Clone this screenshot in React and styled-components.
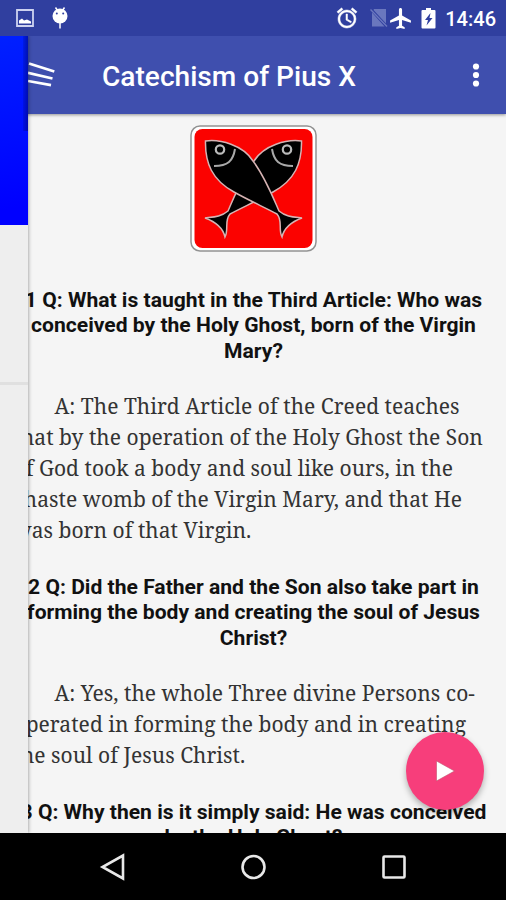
import styled, { createGlobalStyle } from "styled-components";
import { MdAlarm, MdAirplanemodeActive } from "react-icons/md";

const questions = [
  {
    question: [
      "1 Q: What is taught in the Third Article: Who was",
      "conceived by the Holy Ghost, born of the Virgin",
      "Mary?",
    ],
    answer: [
      { text: "A: The Third Article of the Creed teaches", indent: true },
      { text: "that by the operation of the Holy Ghost the Son" },
      { text: "of God took a body and soul like ours, in the" },
      { text: "chaste womb of the Virgin Mary, and that He" },
      { text: "was born of that Virgin." },
    ],
  },
  {
    question: [
      "2 Q: Did the Father and the Son also take part in",
      "forming the body and creating the soul of Jesus",
      "Christ?",
    ],
    answer: [
      { text: "A: Yes, the whole Three divine Persons co-", indent: true },
      { text: "operated in forming the body and in creating" },
      { text: "the soul of Jesus Christ." },
    ],
  },
  {
    question: [
      "3 Q: Why then is it simply said: He was conceived",
      "by the Holy Ghost?",
    ],
    answer: [],
  },
];

const fishPath =
  "M15.5 16 C30 14 53 20 63 36 C75 52 82 70 89 86 C96 92 104 92 112 93 C101 97 94 103 92 112 C88 104 93 96 87 89 C74 82 60 76 44 67 C22 55 15 38 15.5 16 Z";

const Fish = () => (
  <>
    <path d={fishPath} fill="#000" stroke="#d6b3b3" strokeWidth="1.5" />
    <circle cx="30" cy="24.5" r="4.2" fill="#000" stroke="#bbb" strokeWidth="2.2" />
    <path
      d="M45 24 C43 36 38 41 24 41"
      fill="none"
      stroke="#a9a9a9"
      strokeWidth="2"
    />
  </>
);

const App = () => {
  return (
    <Screen>
      <GlobalStyle />
      <StatusBar>
        <StatusGroup>
          <svg width="18" height="18" viewBox="0 0 18 18">
            <path d="M1 1h16v16H1z" fill="none" stroke="#cdd2f0" strokeWidth="1.8" />
            <path d="M3 14.5v-3l3-2 2 2 3-1 4 2v2z" fill="#fff" />
          </svg>
          <svg width="18" height="22" viewBox="0 0 18 22">
            <path d="M4.5.5l2 3M13.5.5l-2 3M9 15v6.5" stroke="#fff" strokeWidth="1.5" />
            <circle cx="9" cy="9" r="7.5" fill="#fff" />
            <circle cx="5.8" cy="6.5" r="1" fill="#303f9f" />
            <circle cx="12.2" cy="6.5" r="1" fill="#303f9f" />
          </svg>
        </StatusGroup>
        <StatusIcons>
          <MdAlarm className="alarm" />
          <svg className="sim" width="18" height="20" viewBox="0 0 18 20">
            <path d="M4 1h12v14.5L3.5 2zM2 4.5l12.5 14H2z" fill="#6a77be" />
            <path d="M.5 1.5l16.5 17" stroke="#6a77be" strokeWidth="1.4" />
          </svg>
          <MdAirplanemodeActive className="plane" />
          <svg className="battery" width="15" height="21" viewBox="0 0 15 21">
            <path d="M5 0h5v2h3.5q1 0 1 1v16.5q0 1-1 1h-12q-1 0-1-1V3q0-1 1-1H5z" fill="#fff" />
            <path d="M9.5 5L4 12h3l-1.5 5.5L11.5 10H8.5z" fill="#303f9f" />
          </svg>
          <time>14:46</time>
        </StatusIcons>
      </StatusBar>
      <Main>
        <AppBar>
          <svg className="menu" width="28" height="28" viewBox="0 0 28 28">
            <path
              d="M1 3.5L26.3 11.5M0 12.8L24.5 18.5M0 21L23 25.2"
              stroke="#fff"
              strokeWidth="2.7"
            />
          </svg>
          <h1>Catechism of Pius X</h1>
          <svg className="more" width="8" height="24" viewBox="0 0 8 24">
            <circle cx="4" cy="3.5" r="3.1" fill="#fff" />
            <circle cx="4" cy="12" r="3.1" fill="#fff" />
            <circle cx="4" cy="20.5" r="3.1" fill="#fff" />
          </svg>
        </AppBar>
        <Article>
          <Emblem viewBox="0 0 127 127">
            <rect x="1" y="1" width="125" height="125" rx="9" fill="#fff" stroke="#929292" strokeWidth="1.5" />
            <rect x="4.5" y="4" width="118" height="119" rx="8" fill="#fb0200" />
            <g transform="translate(127 0) scale(-1 1)">
              <Fish />
            </g>
            <Fish />
          </Emblem>
          {questions.map(({ question, answer }) => (
            <section key={question[0]}>
              <Question>
                {question.map((line) => (
                  <span key={line}>{line}</span>
                ))}
              </Question>
              <Answer>
                {answer.map(({ text, indent }) => (
                  <Line key={text} $indent={indent}>
                    {text}
                  </Line>
                ))}
              </Answer>
            </section>
          ))}
        </Article>
        <Drawer>
          <DrawerHeader />
          <DrawerItems />
        </Drawer>
        <PlayButton aria-label="Play">
          <svg width="20" height="22" viewBox="0 0 20 22">
            <path d="M1.5 1L19.5 11L1.5 21Z" fill="#fff" stroke="#c4506f" strokeWidth=".6" />
          </svg>
        </PlayButton>
      </Main>
      <NavBar>
        <svg width="26" height="28" viewBox="0 0 26 28">
          <path d="M24 2.5v23L3.5 14z" fill="none" stroke="#e8e8e8" strokeWidth="2.6" />
        </svg>
        <svg width="26" height="26" viewBox="0 0 26 26">
          <circle cx="13.5" cy="13" r="11" fill="none" stroke="#e8e8e8" strokeWidth="2.6" />
        </svg>
        <svg width="26" height="26" viewBox="0 0 26 26">
          <rect x="2.5" y="2.5" width="21" height="21" rx="1" fill="none" stroke="#e8e8e8" strokeWidth="2.6" />
        </svg>
      </NavBar>
    </Screen>
  );
};

const GlobalStyle = createGlobalStyle`
  * {
    margin: 0;
    padding: 0;
    box-sizing: border-box;
  }
  body {
    background: #000;
    overflow: hidden;
  }
  svg {
    display: block;
    flex-shrink: 0;
  }
`;

const Screen = styled.div`
  width: 506px;
  height: 900px;
  display: flex;
  flex-direction: column;
  overflow: hidden;
  font-family: Roboto, "Liberation Sans", sans-serif;
`;

const StatusBar = styled.header`
  height: 36px;
  flex-shrink: 0;
  display: flex;
  justify-content: space-between;
  align-items: center;
  padding: 0 10px 0 16px;
  background: #303f9f;
  color: #fff;
`;

const StatusGroup = styled.div`
  display: flex;
  align-items: center;
  gap: 17px;
`;

const StatusIcons = styled.div`
  display: flex;
  align-items: center;
  .alarm {
    font-size: 24px;
    margin-right: 11px;
  }
  .alarm path:last-child {
    stroke: #fff;
    stroke-width: 0.5px;
  }
  .plane {
    font-size: 25px;
    margin-right: 8px;
  }
  .battery {
    margin-right: 9px;
  }
  time {
    margin-top: 2px;
    font-size: 20px;
    font-weight: 500;
  }
`;

const Main = styled.main`
  position: relative;
  height: 797px;
  flex-shrink: 0;
  display: flex;
  flex-direction: column;
  overflow: hidden;
  background: #f5f5f5;
`;

const AppBar = styled.div`
  height: 78px;
  flex-shrink: 0;
  display: flex;
  align-items: center;
  padding: 0 26px 0 28px;
  background: #3f4fae;
  box-shadow: 0 1px 3px rgba(0, 0, 0, 0.4);
  color: #fff;
  .menu {
    margin-top: -3px;
    margin-right: 46px;
  }
  h1 {
    flex: 1;
    margin-top: 2px;
    font-size: 28.1px;
    font-weight: 500;
    white-space: nowrap;
  }
`;

const Article = styled.article`
  padding: 11px 13.5px 0;
`;

const Emblem = styled.svg`
  width: 127px;
  height: 127px;
  margin: 0 auto 34.5px;
`;

const Question = styled.h2`
  display: flex;
  flex-direction: column;
  align-items: center;
  margin-bottom: 28px;
  padding-left: 1px;
  font-size: 21.1px;
  font-weight: 700;
  line-height: 25.5px;
  white-space: nowrap;
  color: #111;
`;

const Answer = styled.div`
  margin-bottom: 27.5px;
  font-family: "Noto Serif", "DejaVu Serif Condensed", serif;
  font-size: 21px;
  line-height: 31px;
  letter-spacing: 0.03px;
  white-space: nowrap;
  color: #333;
`;

const Line = styled.p`
  padding-left: ${({ $indent }) => ($indent ? "41px" : "0")};
`;

const Drawer = styled.aside`
  position: absolute;
  top: 0;
  left: 0;
  bottom: 0;
  width: 28px;
  background: #eee;
  box-shadow: 0 0 4px rgba(0, 0, 0, 0.45);
`;

const DrawerHeader = styled.div`
  height: 189px;
  background:
    linear-gradient(90deg, rgba(0, 0, 60, 0.12), rgba(0, 0, 60, 0.4)) right top /
      5px 95px no-repeat,
    linear-gradient(170deg, #0020ff, #0000ff 90%);
`;

const DrawerItems = styled.div`
  height: 160px;
  border-bottom: 3px solid #e0e0e0;
`;

const PlayButton = styled.button`
  position: absolute;
  left: 405.5px;
  top: 695.5px;
  width: 78.5px;
  height: 78.5px;
  display: flex;
  align-items: center;
  justify-content: center;
  border: none;
  border-radius: 50%;
  background: #f73e7b;
  box-shadow: 0 3px 6px rgba(0, 0, 0, 0.3);
`;

const NavBar = styled.nav`
  flex: 1;
  display: flex;
  align-items: center;
  justify-content: center;
  gap: 115px;
  background: #000;
`;

export default App;
